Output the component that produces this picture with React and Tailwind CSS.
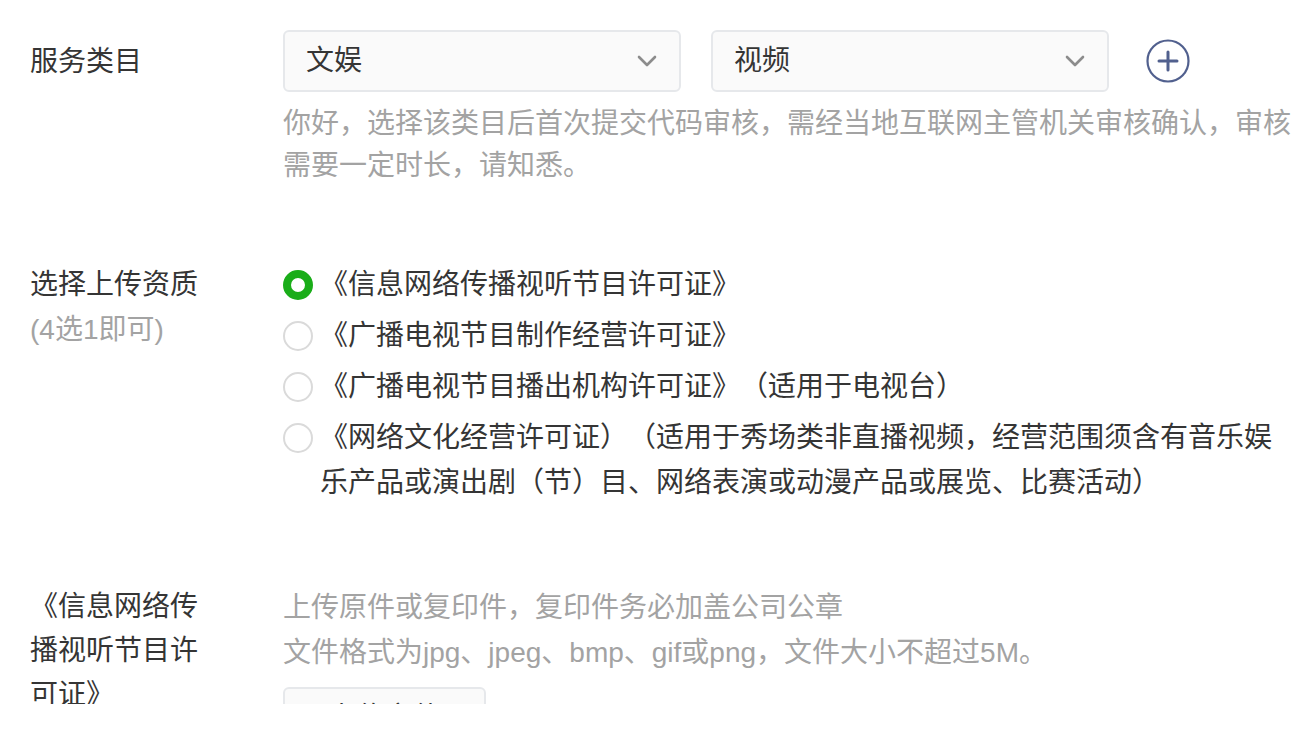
import { useState } from 'react'

const font = 'font-["Liberation_Sans","Noto_Sans_CJK_SC",sans-serif]'

const options = [
  '《信息网络传播视听节目许可证》',
  '《广播电视节目制作经营许可证》',
  '《广播电视节目播出机构许可证》（适用于电视台）',
  '《网络文化经营许可证）（适用于秀场类非直播视频，经营范围须含有音乐娱乐产品或演出剧（节）目、网络表演或动漫产品或展览、比赛活动）',
]

function Chevron() {
  return (
    <svg className="h-[14px] w-[22px]" viewBox="0 0 22 14" fill="none" stroke="#8c8c8c" strokeWidth={2.6} strokeLinecap="round" strokeLinejoin="round">
      <path d="M3 3l8 8 8-8" />
    </svg>
  )
}

function Select({ value }) {
  return (
    <div className="flex h-[62px] w-[398px] items-center justify-between rounded-[6px] border-2 border-[#e6e8eb] bg-[#fafafa] pl-[21px] pr-[21px]">
      <span className="text-[28px] leading-none text-[#353535]">{value}</span>
      <Chevron />
    </div>
  )
}

function PlusIcon() {
  return (
    <svg className="h-[46px] w-[46px]" viewBox="0 0 46 46" fill="none" stroke="#51608e">
      <circle cx="23" cy="23" r="20.5" strokeWidth={2.2} />
      <path d="M23 14v18M14 23h18" strokeWidth={3} strokeLinecap="round" />
    </svg>
  )
}

function Radio({ checked }) {
  return checked ? (
    <span className="mt-[8px] block h-[30px] w-[30px] shrink-0 rounded-full border-[8px] border-[#1aad19] bg-white" />
  ) : (
    <span className="mt-[8px] block h-[30px] w-[30px] shrink-0 rounded-full border-2 border-[#dadada] bg-white" />
  )
}

export default function App() {
  const [selected, setSelected] = useState(0)

  return (
    <div className={`h-[754px] w-[1304px] bg-white ${font} [text-spacing-trim:space-all]`}>
      <div className="h-[704px] overflow-hidden pl-[30px] pt-[30px]">
        {/* 服务类目 */}
        <div className="flex">
          <div className="mr-[73px] flex h-[62px] w-[180px] items-center text-[28px] leading-[45px] text-[#353535]">服务类目</div>
          <div className="w-[1012px]">
            <div className="flex items-center">
              <Select value="文娱" />
              <div className="ml-[30px]"><Select value="视频" /></div>
              <div className="ml-[36px]"><PlusIcon /></div>
            </div>
            <p className="mt-[11px] text-[28px] leading-[42px] text-[#a3a3a3]">
              你好，选择该类目后首次提交代码审核，需经当地互联网主管机关审核确认，审核需要一定时长，请知悉。
            </p>
          </div>
        </div>

        {/* 选择上传资质 */}
        <div className="mt-[75px] flex">
          <div className="mr-[73px] w-[180px] text-[28px] leading-[45px]">
            <div className="text-[#353535]">选择上传资质</div>
            <div className="text-[#a3a3a3]">(4选1即可)</div>
          </div>
          <div className="flex w-[1012px] flex-col gap-[6px]">
            {options.map((text, i) => (
              <div key={i} className="flex cursor-pointer items-start" onClick={() => setSelected(i)}>
                <Radio checked={selected === i} />
                <span className="ml-[7px] text-[28px] leading-[45px] text-[#353535]">{text}</span>
              </div>
            ))}
          </div>
        </div>

        {/* 上传 */}
        <div className="mt-[80px] flex">
          <div className="mr-[73px] w-[180px] text-[28px] leading-[44px] text-[#353535]">《信息网络传播视听节目许可证》</div>
          <div className="w-[1012px]">
            <p className="text-[28px] leading-[45px] text-[#a3a3a3]">上传原件或复印件，复印件务必加盖公司公章</p>
            <p className="text-[28px] leading-[45px] text-[#a3a3a3]">文件格式为jpg、jpeg、bmp、gif或png，文件大小不超过5M。</p>
            <button type="button" className="mt-[12px] flex h-[62px] w-[203px] items-center justify-center rounded-[6px] border-2 border-[#e6e8eb] bg-[#fafafa] text-[28px] text-[#353535]">
              上传文件
            </button>
          </div>
        </div>
      </div>
    </div>
  )
}
